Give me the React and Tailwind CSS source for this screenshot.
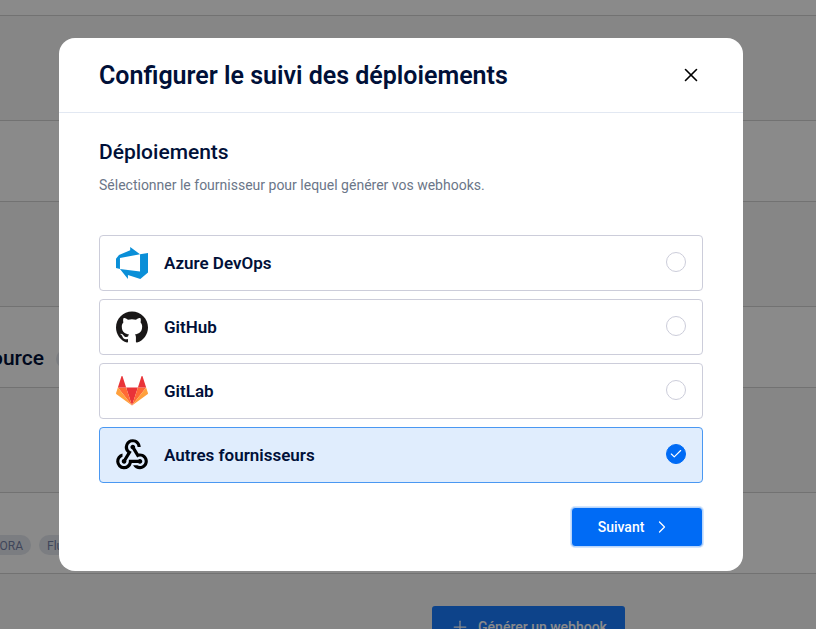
import { useState } from "react";
import { MdWebhook } from "react-icons/md";
import { SiGithub } from "react-icons/si";
import { Check, ChevronRight, Plus, X } from "lucide-react";

function AzureIcon() {
  return (
    <svg viewBox="0 0 24 24" className="size-8 fill-[#0a8fd8]" aria-hidden="true">
      <path d="M0 8.877L2.247 5.91l8.405-3.416V.022l7.37 5.393L2.966 8.338v8.225L0 15.707zm24-4.45v14.651l-5.753 4.9-9.303-3.057v3.056l-5.978-7.416 15.057 1.798V5.415z" />
    </svg>
  );
}

function GitLabIcon() {
  return (
    <svg viewBox="0 0 256 236" className="w-8" aria-hidden="true">
      <path fill="#e93338" d="M128.075 236.075l47.104-144.97H80.97z" />
      <path fill="#ff6a35" d="M128.075 236.074L80.97 91.104H14.956z" />
      <path fill="#ffa03d" d="M14.956 91.104L.642 135.16a9.752 9.752 0 0 0 3.542 10.903l123.891 90.012z" />
      <path fill="#e93338" d="M14.956 91.105H80.97L52.601 3.79c-1.46-4.493-7.816-4.492-9.275 0z" />
      <path fill="#ff6a35" d="M128.075 236.074l47.104-144.97h66.015z" />
      <path fill="#ffa03d" d="M241.194 91.104l14.314 44.056a9.752 9.752 0 0 1-3.543 10.903l-123.89 90.012z" />
      <path fill="#e93338" d="M241.194 91.105h-66.015l28.37-87.315c1.46-4.493 7.816-4.492 9.275 0z" />
    </svg>
  );
}

const providers = [
  { id: "azure", name: "Azure DevOps", icon: <AzureIcon /> },
  { id: "github", name: "GitHub", icon: <SiGithub className="size-8 text-[#191717]" /> },
  { id: "gitlab", name: "GitLab", icon: <GitLabIcon /> },
  { id: "other", name: "Autres fournisseurs", icon: <MdWebhook className="size-[38px] shrink-0 text-black" /> },
];

function Tag({ children }) {
  return (
    <span className="flex h-5 items-center rounded-full bg-[#e4e8ef] px-2 pt-px text-xs whitespace-nowrap text-[#7582a8]">
      {children}
    </span>
  );
}

function Background() {
  return (
    <div className="h-screen overflow-hidden bg-white" aria-hidden="true">
      <div className="h-4 border-b border-[#d3d3d3]" />
      <div className="h-[105px] border-b border-[#d3d3d3] bg-[#f8f8f8]" />
      <div className="h-[81px] border-b border-[#d3d3d3]" />
      <div className="h-[105px] border-b border-[#d3d3d3] bg-[#f8f8f8]" />
      <div className="flex h-[81px] items-center gap-3 border-b border-[#d3d3d3] pt-6">
        <div className="flex w-11 justify-end overflow-hidden text-[21px] font-medium text-[#001038]">Source</div>
        <Tag>1</Tag>
      </div>
      <div className="h-[105px] border-b border-[#d3d3d3] bg-[#f8f8f8]" />
      <div className="flex h-[81px] items-center gap-2 border-b border-[#d3d3d3] pt-6">
        <div className="flex w-[31px] justify-end overflow-hidden">
          <Tag>DORA</Tag>
        </div>
        <Tag>Flux</Tag>
      </div>
      <div className="flex h-[105px] justify-center bg-[#f8f8f8] pt-8 pl-[241px]">
        <button
          type="button"
          tabIndex={-1}
          className="flex h-10 w-[193px] items-center justify-center gap-2 rounded-[3px] bg-[#187cff] pt-0.5 text-sm font-medium text-white"
        >
          <Plus className="size-5" strokeWidth={1.5} />
          Générer un webhook
        </button>
      </div>
    </div>
  );
}

function Provider({ provider, checked, onSelect }) {
  return (
    <label
      className={`flex h-14 cursor-pointer items-center gap-4 rounded border px-4 ${
        checked ? "border-[#4a98f2] bg-[#e0edfd]" : "border-[#cccdda] bg-white"
      }`}
    >
      <span className="flex size-8 items-center justify-center">{provider.icon}</span>
      <span className="flex-1 pt-0.5 text-[17px] font-semibold text-[#001038]">{provider.name}</span>
      <span className="grid place-items-center pb-0.5">
        <input
          type="radio"
          name="provider"
          value={provider.id}
          checked={checked}
          onChange={() => onSelect(provider.id)}
          className="col-start-1 row-start-1 size-5 appearance-none rounded-full border border-[#cccdda] bg-white outline-none checked:border-[#006bf5] checked:bg-[#006bf5]"
        />
        {checked && <Check className="pointer-events-none col-start-1 row-start-1 size-3.5 text-white" strokeWidth={2} />}
      </span>
    </label>
  );
}

export default function App() {
  const [selected, setSelected] = useState("other");
  return (
    <div className="font-[Roboto,sans-serif]">
      <Background />
      <div className="fixed inset-0 flex items-start justify-center overflow-hidden bg-black/46 pt-[38px] pr-[14px]">
        <div role="dialog" aria-modal="true" aria-labelledby="dialog-title" className="w-full max-w-[684px] rounded-2xl bg-white">
          <header className="flex h-[75px] items-center justify-between border-b border-[#e2e8f2] px-10">
            <h1 id="dialog-title" className="pt-0.5 text-[25px] font-semibold text-[#001038]">
              Configurer le suivi des déploiements
            </h1>
            <button type="button" aria-label="Fermer" className="flex size-6 items-center justify-center text-black">
              <X className="size-[22px]" strokeWidth={1.75} />
            </button>
          </header>
          <form className="px-10 pt-6 pb-6" onSubmit={(e) => e.preventDefault()}>
            <h2 className="text-[21px] leading-[30px] font-medium text-[#001038]">Déploiements</h2>
            <p className="mt-1.5 text-sm leading-6 text-[#6b7688]">
              Sélectionner le fournisseur pour lequel générer vos webhooks.
            </p>
            <div className="mt-[38px] flex flex-col gap-2">
              {providers.map((p) => (
                <Provider key={p.id} provider={p} checked={p.id === selected} onSelect={setSelected} />
              ))}
            </div>
            <div className="mt-6 flex justify-end">
              <button
                type="submit"
                className="flex h-10 w-[132px] items-center justify-center gap-2 rounded border border-[#b8d5fb] bg-[#006bf5] pr-1 text-sm font-medium text-white ring-1 ring-[#b8d5fb]/60"
              >
                Suivant
                <ChevronRight className="size-5" strokeWidth={1.5} />
              </button>
            </div>
          </form>
        </div>
      </div>
    </div>
  );
}
